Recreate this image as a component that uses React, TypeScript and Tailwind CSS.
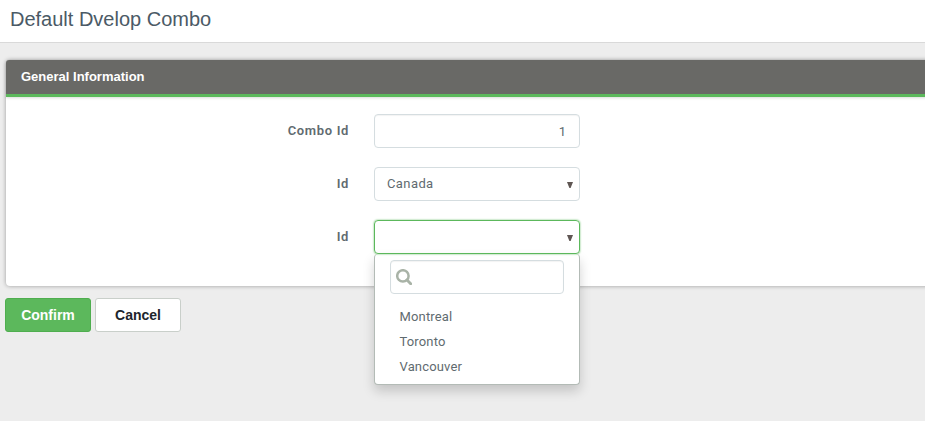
import type { ReactNode } from 'react';

const cities = ['Montreal', 'Toronto', 'Vancouver'];

function Caret() {
  return (
    <svg className="relative top-px h-[6px] w-[6px] fill-[#5f5653]" viewBox="0 0 6 6">
      <path d="M0 0h6L3.6 6H2.4z" />
    </svg>
  );
}

function Row({ label, children }: { label: string; children: ReactNode }) {
  return (
    <div className="flex h-[34px]">
      <label className="w-[343px] pt-2 text-right font-['Roboto',sans-serif] text-[13px] leading-[17px] font-semibold tracking-[0.65px] text-[#5f6b70]">
        {label}
      </label>
      <div className="relative ml-[25px] w-[206px] font-['Roboto',sans-serif]">{children}</div>
    </div>
  );
}

function SearchIcon() {
  return (
    <svg className="h-4 w-4" viewBox="0 0 16 16" fill="none" stroke="#a9b3a7">
      <circle cx="6.9" cy="6.9" r="5.7" strokeWidth="2.5" />
      <path d="M11 11 14.7 14.7" strokeWidth="2.9" strokeLinecap="round" />
    </svg>
  );
}

function Dropdown() {
  return (
    <div className="absolute top-[34px] left-0 h-[131px] w-[206px] rounded-[4px] border border-t-0 border-[#b3bbb6] bg-white px-[15px] pt-[6px] shadow-[0_6px_12px_rgba(0,0,0,0.175)]">
      <div className="flex h-[34px] w-[174px] items-center rounded-[4px] border border-[#d5dde0] pl-[5px] shadow-[inset_0_1px_1px_rgba(0,0,0,0.05)]">
        <SearchIcon />
      </div>
      <ul className="mt-[10px] pl-[9.5px] text-[13px] leading-[25px] tracking-[0.15px] text-[#5f6b70]">
        {cities.map((city) => (
          <li key={city}>{city}</li>
        ))}
      </ul>
    </div>
  );
}

export default function App() {
  return (
    <div className="h-[421px] w-full overflow-hidden bg-[#ededed] font-['Liberation_Sans',Arial,sans-serif]">
      <header className="h-[43px] border-b border-[#d9d9d9] bg-white pt-[7px] pl-[10px]">
        <h1 className="text-[20px] leading-[24px] text-[#4b5a66]">Default Dvelop Combo</h1>
      </header>
      <section className="mt-[17px] -mr-2 ml-[6px] h-[226px] rounded-[4px] bg-white shadow-[0_0_4px_rgba(0,0,0,0.35)]">
        <div className="h-[37px] rounded-t-[3px] border-b-[3px] border-[#5cb85c] bg-[#696966] pt-2 pl-[15px] shadow-[0_1px_3px_rgba(0,0,0,0.15)]">
          <h2 className="text-[13px] leading-[17px] font-bold text-white">General Information</h2>
        </div>
        <div className="flex flex-col gap-[19px] pt-[17px]">
          <Row label="Combo Id">
            <div className="h-full rounded-[4px] border border-[#d5dde0] pr-[13px] text-right text-[13px] leading-[34px] text-[#5f6b70] shadow-[inset_0_1px_1px_rgba(0,0,0,0.05)]">
              1
            </div>
          </Row>
          <Row label="Id">
            <div className="flex h-full items-center justify-between rounded-[4px] border border-[#d5dde0] pr-[6px] pl-3 text-[13px] tracking-[0.4px] text-[#5f6b70]">
              <span>Canada</span>
              <Caret />
            </div>
          </Row>
          <Row label="Id">
            <Dropdown />
            <div className="relative flex h-[34px] items-center justify-end rounded-[4px] border border-[#5cb85c] pr-[6px] shadow-[0_0_2px_#5cb85c]">
              <Caret />
            </div>
          </Row>
        </div>
      </section>
      <div className="mt-3 ml-[5px] flex gap-1">
        <button className="h-[34px] w-[86px] rounded-[3px] border border-[#4fae4f] bg-[#5cb85c] text-[14px] font-bold text-white">
          Confirm
        </button>
        <button className="h-[34px] w-[86px] rounded-[3px] border border-[#c9cfca] bg-white text-[14px] font-bold text-[#20252c]">
          Cancel
        </button>
      </div>
    </div>
  );
}
